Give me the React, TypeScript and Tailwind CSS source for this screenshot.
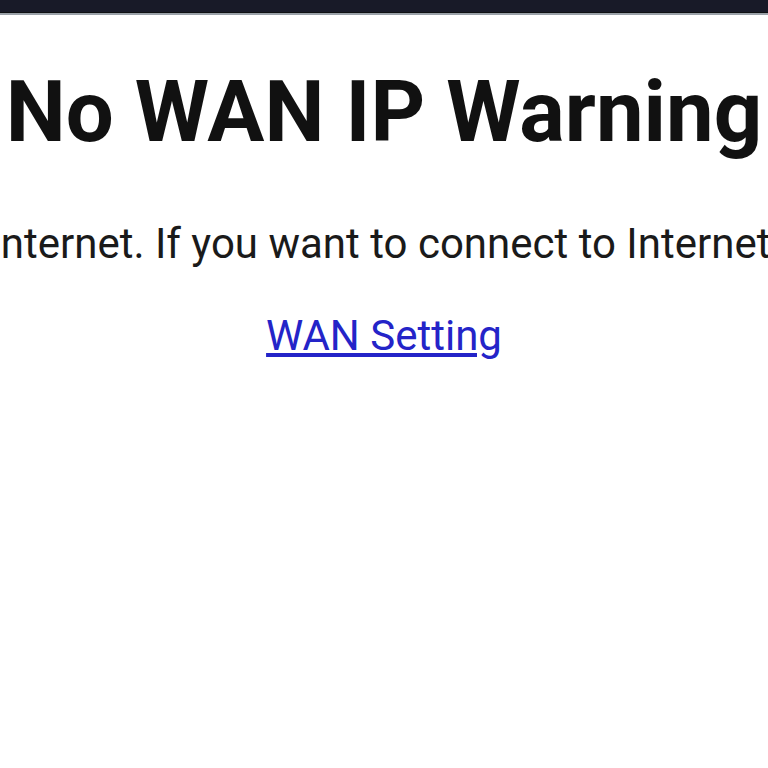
export default function App() {
  return (
    <div className="min-h-screen w-full overflow-hidden bg-white font-['Roboto',sans-serif]">
      {/* top bar */}
      <div className="h-[12px] bg-[#181a28]" />
      <div className="h-px bg-[#0e1012]" />
      <div className="h-[2px] bg-[#9aa1a8]" />

      <h1 className="mt-[55px] whitespace-nowrap text-center text-[85px] font-bold leading-none text-[#111]">
        No WAN IP Warning
      </h1>

      <div className="mt-[68px] flex justify-center">
        <p className="whitespace-nowrap text-[42px] leading-none text-[#1a1a1a]">
          Internet. If you want to connect to Internet,
        </p>
      </div>

      <div className="mt-[50px] flex justify-center">
        <a href="#" className="text-[42px] leading-none text-[#2424c8] underline">
          WAN Setting
        </a>
      </div>
    </div>
  )
}
